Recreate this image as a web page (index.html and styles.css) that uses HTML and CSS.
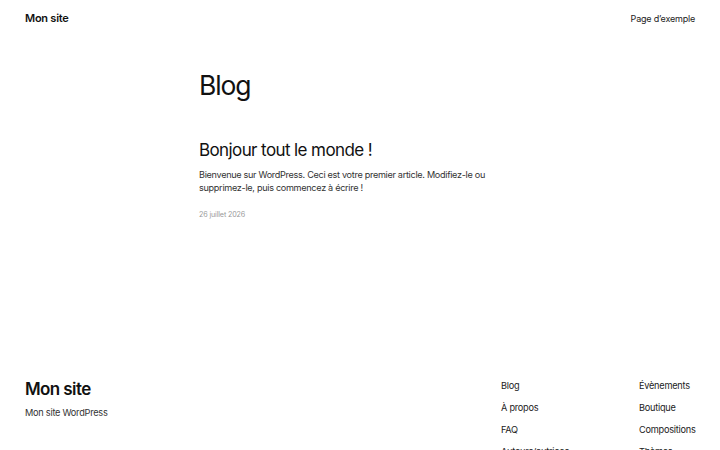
FILE: index.html
```html
<!DOCTYPE html>
<html lang="fr">
<head>
<meta charset="utf-8">
<title>Blog – Mon site</title>
<link rel="stylesheet" href="styles.css">
</head>
<body>
<header class="site-header">
  <a class="site-title" href="#">Mon site</a>
  <nav class="header-nav"><a href="#">Page d’exemple</a></nav>
</header>
<main class="site-main">
  <h1 class="page-title">Blog</h1>
  <article class="post">
    <h2 class="post-title">Bonjour tout le monde !</h2>
    <p class="post-excerpt">Bienvenue sur WordPress. Ceci est votre premier article. Modifiez-le ou supprimez-le, puis commencez à écrire !</p>
    <time class="post-date">26 juillet 2026</time>
  </article>
</main>
<footer class="site-footer">
  <div class="footer-brand">
    <a class="footer-title" href="#">Mon site</a>
    <p class="footer-tagline">Mon site WordPress</p>
  </div>
  <nav class="footer-nav">
    <ul class="footer-col">
      <li><a href="#">Blog</a></li>
      <li><a href="#">À propos</a></li>
      <li><a href="#">FAQ</a></li>
      <li><a href="#">Auteurs/autrices</a></li>
    </ul>
    <ul class="footer-col">
      <li><a href="#">Évènements</a></li>
      <li><a href="#">Boutique</a></li>
      <li><a href="#">Compositions</a></li>
      <li><a href="#">Thèmes</a></li>
    </ul>
  </nav>
</footer>
</body>
</html>
```
FILE: styles.css
```css
* { box-sizing: border-box; }
html, body { margin: 0; padding: 0; }
body {
  font-family: Inter, "Noto Sans", sans-serif;
  color: #111;
  background: #fff;
  width: 720px;
  height: 450px;
  overflow: hidden;
}
a { color: inherit; text-decoration: none; }

.site-header {
  display: flex;
  justify-content: space-between;
  align-items: center;
  padding: 0 25px;
  height: 35px;
  line-height: 14px;
}
.site-title {
  font-size: 11px;
  font-weight: 600;
  letter-spacing: -0.25px;
  color: #111;
}
.header-nav a {
  font-size: 9px;
  color: #222;
  letter-spacing: -0.2px;
}

.site-main {
  width: 322px;
  margin: 0 auto;
  padding-top: 33px;
  height: 326px;
}
.page-title {
  margin: 0;
  font-size: 26.5px;
  font-weight: 400;
  line-height: 34px;
  letter-spacing: -1.1px;
  color: #111;
}
.post { margin-top: 37px; }
.post-title {
  margin: 0;
  font-size: 17px;
  font-weight: 400;
  line-height: 22px;
  letter-spacing: -0.6px;
  color: #111;
}
.post-excerpt {
  margin: 7px 0 0 0;
  font-size: 9.1px;
  line-height: 13px;
  color: #333;
  letter-spacing: -0.3px;
}
.post-date {
  display: block;
  margin-top: 16px;
  font-size: 7.2px;
  color: #999;
  letter-spacing: -0.15px;
}

.site-footer {
  display: flex;
  padding: 0 25px;
}
.footer-brand { flex: 1; }
.footer-title {
  display: block;
  font-size: 17px;
  font-weight: 600;
  line-height: 22px;
  letter-spacing: -0.6px;
  margin-top: 17px;
}
.footer-tagline {
  margin: 7px 0 0 0;
  font-size: 9.2px;
  color: #333;
  letter-spacing: -0.25px;
}
.footer-nav {
  display: flex;
  margin-top: 14px;
}
.footer-col {
  list-style: none;
  margin: 0;
  padding: 0;
  width: 138px;
}
.footer-col:last-child { width: 56px; }
.footer-col li {
  font-size: 9.2px;
  line-height: 22px;
  color: #222;
  letter-spacing: -0.25px;
  white-space: nowrap;
}
```
